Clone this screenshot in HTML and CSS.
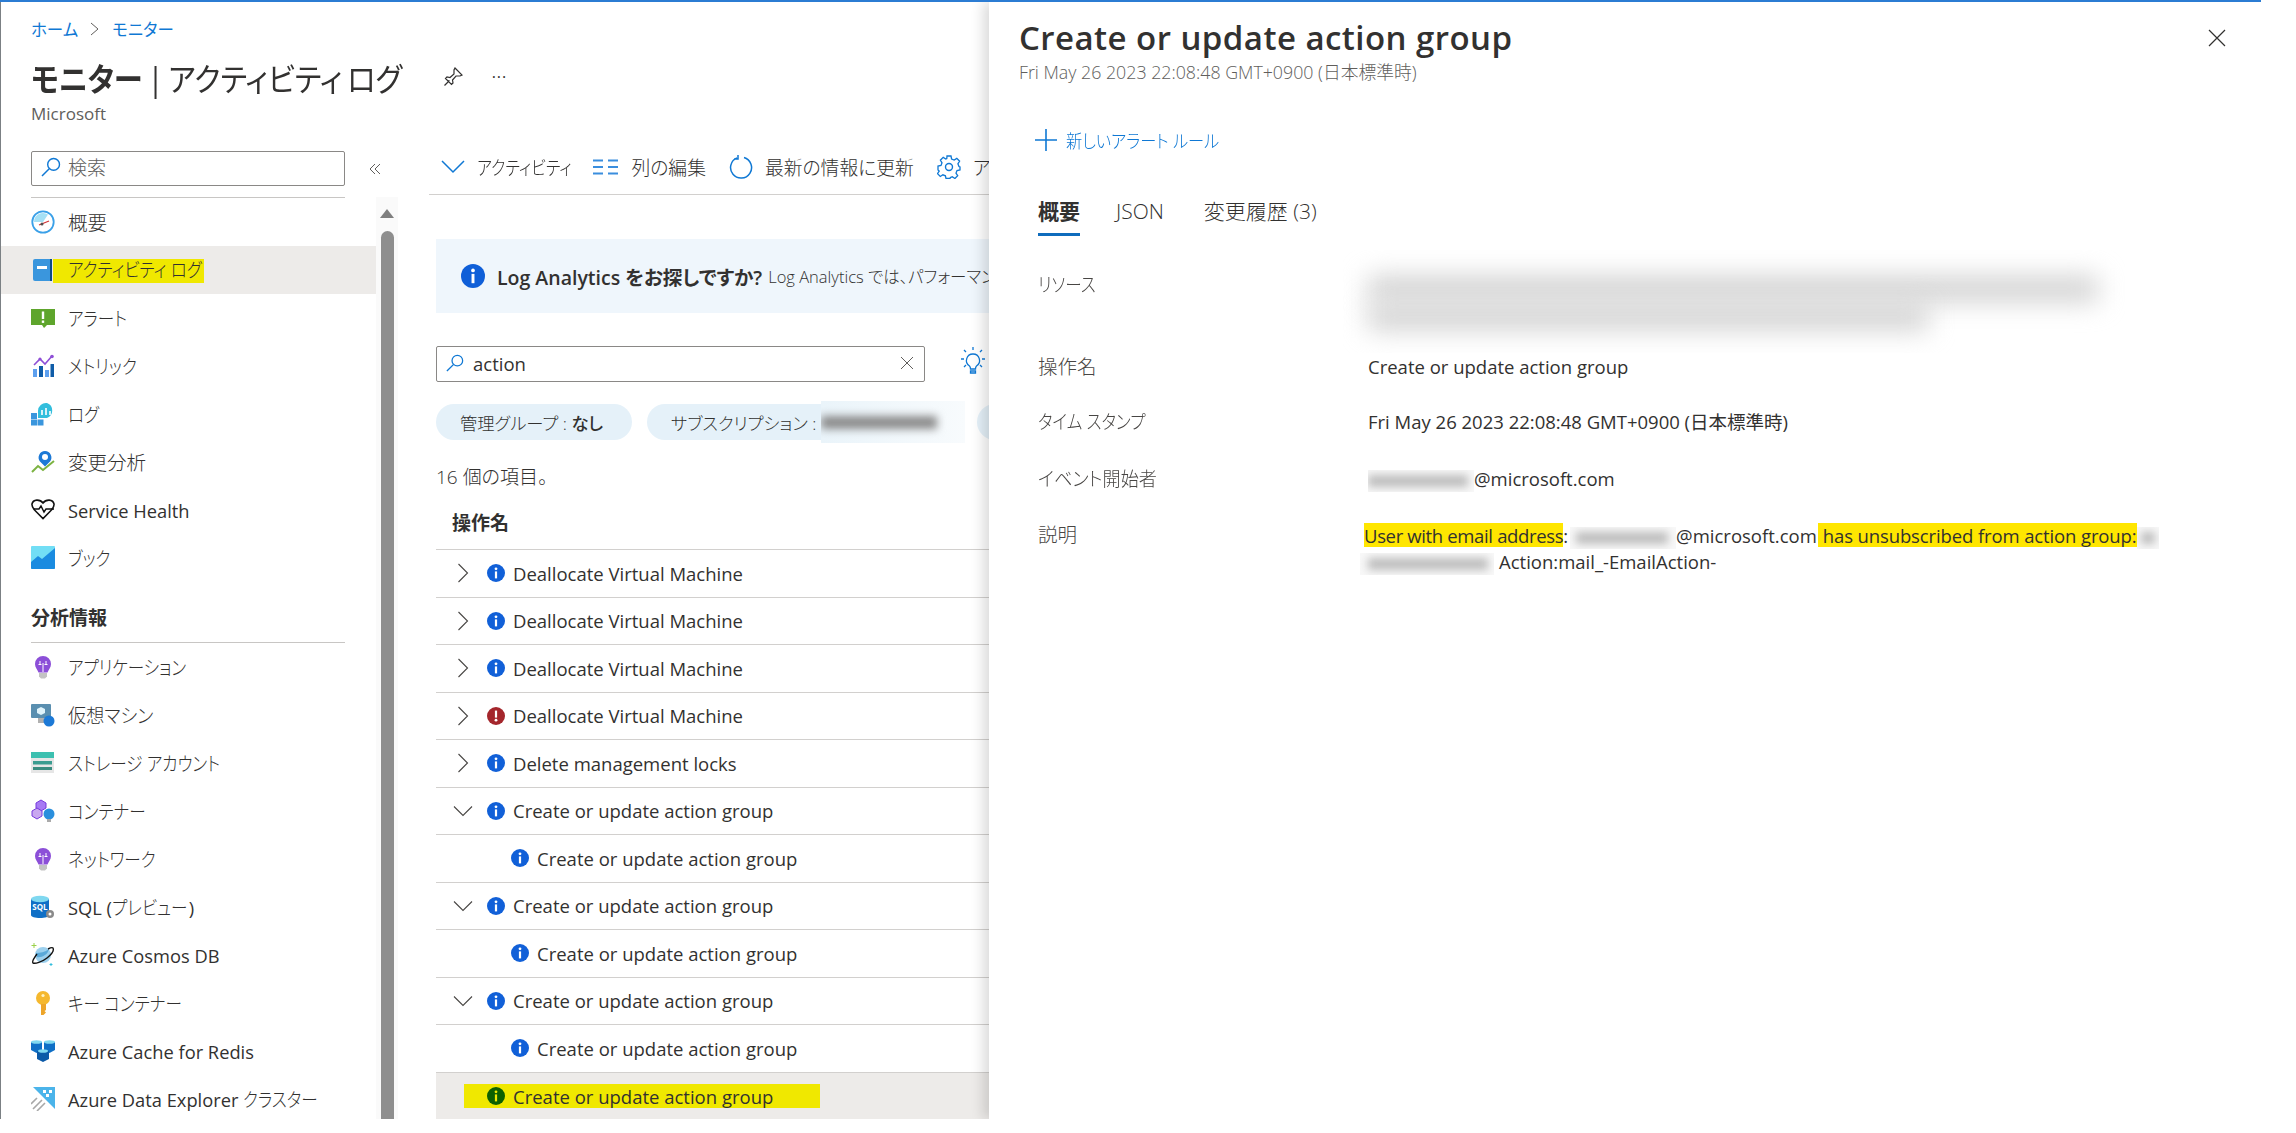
FILE: index.html
```html
<!DOCTYPE html>
<html lang="ja">
<head>
    <meta charset="UTF-8">
    <title>モニター | アクティビティ ログ</title>
    <link rel="stylesheet" href="styles.css">
</head>
<body>

<svg class="defs" width="0" height="0">
    <symbol id="info" viewBox="0 0 18 18"><circle cx="9" cy="9" r="9" fill="currentColor"/><rect x="7.9" y="7.4" width="2.2" height="7" style="fill:var(--mark,#fff)"/><circle cx="9" cy="4.8" r="1.4" style="fill:var(--mark,#fff)"/></symbol>
    <symbol id="err" viewBox="0 0 18 18"><circle cx="9" cy="9" r="9" fill="#a4262c"/><rect x="7.9" y="3.6" width="2.2" height="7" fill="#fff"/><circle cx="9" cy="13.2" r="1.4" fill="#fff"/></symbol>
    <symbol id="right" viewBox="0 0 12 20"><path d="M1.5 1l9 9-9 9" fill="none" stroke="#484644" stroke-width="1.1"/></symbol>
    <symbol id="down" viewBox="0 0 20 12"><path d="M1 1.500l9 9 9-9" fill="none" stroke="#484644" stroke-width="1.1"/></symbol>
    <symbol id="lens" viewBox="0 0 20 20"><circle cx="12.600" cy="7.400" r="5.900" fill="none" stroke="#0f78d4" stroke-width="1.400"/><path d="M8.200 11.800L1 19" fill="none" stroke="#0f78d4" stroke-width="1.500"/></symbol>
    <symbol id="bulb" viewBox="0 0 24 24"><path d="M12 1a8 8 0 0 0-8 8c0 3.500 2.500 5.500 3.500 8.500h9c1-3 3.500-5 3.500-8.500a8 8 0 0 0-8-8z" fill="#8c4fd8"/><path d="M8 18h8v3.500l-2 2h-4l-2-2z" fill="#c3c3c3"/><path d="M9 6v3.500M15 6v3.500M7.500 9.500h3M13.500 9.500h3M12 8v9" stroke="#fff" stroke-width="1" fill="none"/></symbol>
</svg>

<div class="page">
    <div class="blade">
        <header class="blade-head">
            <nav class="crumbs"><a>ホーム</a>
                <svg width="10" height="14" viewBox="0 0 10 14"><path d="M1 1l7 6-7 6" fill="none" stroke="#605e5c"/></svg>
                <a>モニター</a></nav>
            <div class="title-row">
                <h1><b>モニター</b> | アクティビティ ログ</h1>
                <svg class="pin" width="22" height="22" viewBox="0 0 22 22"><path d="M13 2l7 7-2 1-4 0-3.500 4 .5 3-1.500 1.500-6-6L5 11l3 .5 4-3.500 0-4zM7.500 14.500L2.500 19.500" fill="none" stroke="#323130" stroke-width="1.200"/></svg>
                <span class="more">···</span>
            </div>
            <div class="org">Microsoft</div>
        </header>

        <div class="columns">
            <aside class="side">
                <div class="side-search">
                    <div class="searchbox">
                        <svg width="20" height="20"><use href="#lens"/></svg>
                        <span>検索</span>
                    </div>
                    <svg class="collapse" width="12" height="12" viewBox="0 0 12 12"><path d="M6 1L1 6l5 5M11 1L6 6l5 5" fill="none" stroke="#605e5c"/></svg>
                </div>
                <div class="side-body">
                    <div class="menu">
                        <div class="menu-sep"></div>
                        <a class="item"><svg class="ico" viewBox="0 0 24 24"><circle cx="12" cy="12" r="10.700" fill="#fff" stroke="#3aa0e8" stroke-width="1.800"/><path d="M3 12a9 9 0 0 1 14-7.500L12 12z" fill="#a5e0f5"/><path d="M8 15l10-4" stroke="#d13438" stroke-width="1.300"/><circle cx="11" cy="14" r="1.500" fill="#505050"/></svg><span class="squeeze squeeze-off">概要</span></a>
                        <a class="item active"><svg class="ico" viewBox="0 0 24 24"><rect x="2" y="1" width="19" height="22" rx="2" fill="#3a96dd"/><rect x="19" y="1" width="2" height="22" fill="#0f4a85"/><rect x="6" y="8" width="10" height="3" fill="#fff"/></svg><span class="hl"><span class="squeeze">アクティビティ ログ</span></span></a>
                        <a class="item"><svg class="ico" viewBox="0 0 24 24"><path d="M0 3h24v16h-8l-3 3-2-3H0z" fill="#5ea52c"/><rect x="10.800" y="5.500" width="2.400" height="7.500" fill="#fff"/><rect x="10.800" y="14.500" width="2.400" height="2.400" fill="#fff"/></svg><span class="squeeze">アラート</span></a>
                        <a class="item"><svg class="ico" viewBox="0 0 24 24"><rect x="2" y="15" width="4" height="8" fill="#5ea0ef"/><rect x="8" y="12" width="4" height="11" fill="#0f5ca8"/><rect x="14" y="16" width="4" height="7" fill="#5ea0ef"/><rect x="19.500" y="10" width="3.500" height="13" fill="#0f5ca8"/><path d="M3 11l6-6 5 5 7-8" fill="none" stroke="#8f4fd6" stroke-width="1.600"/><circle cx="21" cy="2.500" r="1.800" fill="#8f4fd6"/><circle cx="9" cy="5" r="1.600" fill="#8f4fd6"/></svg><span class="squeeze">メトリック</span></a>
                        <a class="item"><svg class="ico" viewBox="0 0 24 24"><rect x="0" y="11" width="6" height="6" fill="#3a96dd"/><rect x="0" y="17.500" width="6" height="6" fill="#3a96dd"/><rect x="6.500" y="17.500" width="6" height="6" fill="#3a96dd"/><path d="M16 1a8 8 0 0 1 0 15H7V9a8 8 0 0 1 9-8z" fill="#32bedd"/><path d="M11 8v5M15 6v7M19 9v4" stroke="#fff" stroke-width="1.600"/></svg><span class="squeeze">ログ</span></a>
                        <a class="item"><svg class="ico" viewBox="0 0 24 24"><path d="M1 22l6-6 5 4 11-9" fill="none" stroke="#7cb342" stroke-width="2"/><path d="M14 1a6.500 6.500 0 0 0-5 10.500l5 5 5-5A6.500 6.500 0 0 0 14 1z" fill="#1c79d6"/><circle cx="14" cy="7" r="3" fill="#fff"/></svg><span class="squeeze squeeze-off">変更分析</span></a>
                        <a class="item"><svg class="ico" viewBox="0 0 24 24"><path d="M12 5C9 1 2 1 1 6c-.5 3 2 5.500 4 7.500l7 7 7-7c2-2 4.500-4.500 4-7.500-1-5-8-5-11-1z" fill="none" stroke="#111" stroke-width="1.600"/><path d="M3 11h5l2-3 3 6 2-3h8" fill="#fff" stroke="#111" stroke-width="1.400"/></svg><span class="lat">Service Health</span></a>
                        <a class="item"><svg class="ico" viewBox="0 0 24 24"><rect width="24" height="23" rx="1" fill="#72def5"/><path d="M0 16l7-6 4 3 13-11v20a1 1 0 0 1-1 1H1a1 1 0 0 1-1-1z" fill="#1a8be0"/></svg><span class="squeeze">ブック</span></a>
                        <h3 class="menu-head">分析情報</h3>
                        <a class="item"><svg class="ico"><use href="#bulb"/></svg><span class="squeeze">アプリケーション</span></a>
                        <a class="item"><svg class="ico" viewBox="0 0 24 24"><rect y="1" width="20" height="14" rx="1" fill="#5a8fb0"/><path d="M7 15h6v5H7z" fill="#b0b0b0"/><path d="M10 4l4 2v4l-4 2-4-2V6z" fill="#dff3fb"/><circle cx="18" cy="18" r="5.500" fill="#1c79d6"/></svg><span class="squeeze squeeze-mixed">仮想マシン</span></a>
                        <a class="item"><svg class="ico" viewBox="0 0 24 24"><rect y="1" width="23" height="21" fill="#e6e6e6"/><rect y="1" width="23" height="6" fill="#3cc0b0"/><rect x="2" y="10" width="19" height="3.500" fill="#3a9c90"/><rect x="2" y="16" width="19" height="3" fill="#3a8c80"/></svg><span class="squeeze">ストレージ アカウント</span></a>
                        <a class="item"><svg class="ico" viewBox="0 0 24 24"><path d="M10 1l5 3v5l-5 3-5-3V4z" fill="#a67af4" stroke="#773adc"/><path d="M6 9l5 3v5l-5 3-5-3v-5z" fill="#c9a8f0" stroke="#773adc"/><circle cx="18" cy="15" r="5.500" fill="#2a8fdd"/><rect x="16" y="20" width="4" height="3" fill="#aaa"/></svg><span class="squeeze">コンテナー</span></a>
                        <a class="item"><svg class="ico"><use href="#bulb"/></svg><span class="squeeze">ネットワーク</span></a>
                        <a class="item"><svg class="ico" viewBox="0 0 24 24"><path d="M0 4v16c0 2 4 3 9 3s9-1 9-3V4z" fill="#0f6fc6"/><ellipse cx="9" cy="4" rx="9" ry="3.200" fill="#7fd8f0"/><text class="sql" x="9" y="15" text-anchor="middle">SQL</text><circle cx="19" cy="19" r="4" fill="#8a8a8a"/><circle cx="19" cy="19" r="1.500" fill="#fff"/></svg><span class="lat">SQL (</span><span class="squeeze squeeze-pull">プレビュー</span><span class="lat">)</span></a>
                        <a class="item"><svg class="ico" viewBox="0 0 24 24"><circle cx="12" cy="12" r="8" fill="#9cd0ee"/><path d="M5 10c4 0 9-1 13-4-1 6-8 9-12 8z" fill="#59a8d8"/><path d="M6 11c-3 4-5 8-4 9 2 1 9-1 14-5s7-8 6-10c-1-1-3 0-5 1" fill="none" stroke="#111" stroke-width="1.400"/><path d="M3 0v5M.5 2.500h5" stroke="#9ad14a"/><path d="M20 20v3M18.500 21.500h3" stroke="#32bedd"/></svg><span class="lat">Azure Cosmos DB</span></a>
                        <a class="item"><svg class="ico" viewBox="0 0 24 24"><circle cx="12" cy="7" r="7" fill="#f5b82e"/><circle cx="12" cy="4.500" r="1.600" fill="#fff3c4"/><path d="M10 13h5v6l-1.500 1 1.500 1.500-2.500 2.500H10z" fill="#eda52a"/></svg><span class="squeeze">キー コンテナー</span></a>
                        <a class="item"><svg class="ico" viewBox="0 0 24 24"><path d="M0 3h11v8l-5.500 3L0 11z" fill="#0f6fc6"/><path d="M13 3h11v8l-5.500 3L13 11z" fill="#0f6fc6"/><path d="M6 12h12v8l-6 3-6-3z" fill="#0b5aa8"/><ellipse cx="5.500" cy="3" rx="5.500" ry="1.800" fill="#7fd8f0"/><ellipse cx="18.500" cy="3" rx="5.500" ry="1.800" fill="#7fd8f0"/><ellipse cx="12" cy="12" rx="5" ry="1.800" fill="#7fd8f0"/></svg><span class="lat">Azure Cache for Redis</span></a>
                        <a class="item"><svg class="ico" viewBox="0 0 24 24"><path d="M2 0h22v22z" fill="#4bb4ea"/><g fill="#fff"><rect x="12" y="3" width="3" height="3"/><rect x="18" y="3" width="3" height="3"/><rect x="15" y="7" width="3" height="3"/></g><path d="M2 22L11 13M6 24l8-8M0 17l6-6" stroke="#a8a8a8" stroke-width="1.600"/></svg><span class="lat">Azure Data Explorer </span><span class="squeeze">クラスター</span></a>
                    </div>
                    <div class="scroll">
                        <i class="scroll-up"></i>
                        <i class="scroll-thumb"></i>
                    </div>
                </div>
            </aside>

            <main class="main">
                <div class="toolbar">
                    <button class="tool"><svg width="24" height="14" viewBox="0 0 24 14"><path d="M1 1l11 11L23 1" fill="none" stroke="#0f78d4" stroke-width="1.500"/></svg><span class="squeeze squeeze-tool">アクティビティ</span></button>
                    <button class="tool"><svg width="26" height="16" viewBox="0 0 26 16"><path d="M0 1.500h10M0 8h10M0 14.500h10M15 1.500h10M15 8h10M15 14.500h10" stroke="#3a8ede" stroke-width="2"/></svg>列の編集</button>
                    <button class="tool"><svg width="24" height="26" viewBox="0 0 24 26"><path d="M15 3.500a10.500 10.500 0 1 1-7 .4M9 1v4H5" fill="none" stroke="#0f78d4" stroke-width="1.500"/></svg>最新の情報に更新</button>
                    <button class="tool"><svg width="24" height="24" viewBox="0 0 24 24"><circle cx="12" cy="12" r="3.500" fill="none" stroke="#0f78d4" stroke-width="1.400"/><path d="M10 1h4l.6 3 2.600 1.100 2.600-1.700 2.800 2.800-1.700 2.600L22 11.500l1 .5v3l-3 .6-1 2.500 1.700 2.600-2.800 2.800-2.600-1.700-1.900.7-.4 1h-4l-.6-2.700-2.500-1-2.600 1.700-2.800-2.800 1.700-2.600L1 15v-4l3-.6 1-2.600L3.400 5.200l2.800-2.800 2.600 1.700 1-.5z" fill="none" stroke="#0f78d4" stroke-width="1.300"/></svg>アラート</button>
                </div>

                <div class="banner">
                    <svg class="banner-icon" width="24" height="24" style="color:#0f5fd8"><use href="#info"/></svg>
                    <span class="banner-lead">Log Analytics をお探しですか?</span>
                    <span class="banner-text">Log Analytics では、パフォーマンス</span>
                </div>

                <div class="filter-row">
                    <div class="filter">
                        <svg width="18" height="20"><use href="#lens"/></svg>
                        <span class="filter-text">action</span>
                        <svg class="filter-x" width="14" height="14" viewBox="0 0 14 14"><path d="M1 1l12 12M13 1L1 13" stroke="#605e5c"/></svg>
                    </div>
                    <svg class="tip" width="24" height="28" viewBox="0 0 24 28"><path d="M12 7a6.500 6.500 0 0 0-3.500 12c.5.500 1 2 1 3h5c0-1 .5-2.500 1-3A6.500 6.500 0 0 0 12 7zM9.500 24h5v2h-5zM12 0v3M3 3l2 2M21 3l-2 2M0 12h3M21 12h3M3 20l2-2M21 20l-2-2" fill="none" stroke="#0f78d4" stroke-width="1.300"/></svg>
                </div>

                <div class="pills">
                    <span class="pill">管理グループ : <b>なし</b></span>
                    <span class="pill pill-masked">サブスクリプション : <span class="masked"><i class="smear"></i></span></span>
                    <span class="pill pill-next"></span>
                </div>

                <div class="count">16 個の項目。</div>
                <div class="col-head">操作名</div>

                <div class="rows">
                    <div class="row"><svg class="chev"><use href="#right"/></svg><svg class="dot"><use href="#info"/></svg>Deallocate Virtual Machine</div>
                    <div class="row"><svg class="chev"><use href="#right"/></svg><svg class="dot"><use href="#info"/></svg>Deallocate Virtual Machine</div>
                    <div class="row"><svg class="chev"><use href="#right"/></svg><svg class="dot"><use href="#info"/></svg>Deallocate Virtual Machine</div>
                    <div class="row"><svg class="chev"><use href="#right"/></svg><svg class="dot"><use href="#err"/></svg>Deallocate Virtual Machine</div>
                    <div class="row"><svg class="chev"><use href="#right"/></svg><svg class="dot"><use href="#info"/></svg>Delete management locks</div>
                    <div class="row"><svg class="chev chev-down"><use href="#down"/></svg><svg class="dot"><use href="#info"/></svg>Create or update action group</div>
                    <div class="row child"><svg class="dot"><use href="#info"/></svg>Create or update action group</div>
                    <div class="row"><svg class="chev chev-down"><use href="#down"/></svg><svg class="dot"><use href="#info"/></svg>Create or update action group</div>
                    <div class="row child"><svg class="dot"><use href="#info"/></svg>Create or update action group</div>
                    <div class="row"><svg class="chev chev-down"><use href="#down"/></svg><svg class="dot"><use href="#info"/></svg>Create or update action group</div>
                    <div class="row child"><svg class="dot"><use href="#info"/></svg>Create or update action group</div>
                    <div class="row selected"><span class="row-hl"><svg class="dot"><use href="#info"/></svg>Create or update action group</span></div>
                </div>
            </main>
        </div>
    </div>

    <section class="panel">
        <svg class="panel-close" width="18" height="18" viewBox="0 0 18 18"><path d="M1 1l16 16M17 1L1 17" stroke="#323130" stroke-width="1.200"/></svg>
        <h2>Create or update action group</h2>
        <div class="panel-date">Fri May 26 2023 22:08:48 GMT+0900 (日本標準時)</div>

        <a class="new-rule"><svg width="22" height="22" viewBox="0 0 22 22"><path d="M11 0v22M0 11h22" stroke="#0f78d4" stroke-width="1.600"/></svg><span class="squeeze squeeze-rule">新しいアラート ルール</span></a>

        <div class="tabs">
            <span class="tab on">概要</span>
            <span class="tab">JSON</span>
            <span class="tab tab-last">変更履歴 (3)</span>
        </div>

        <dl class="details">
            <dt class="dt-first"><span class="squeeze">リソース</span></dt>
            <dd><div class="resource-blur"><i class="smear smear-long"></i><i class="smear smear-short"></i></div></dd>
            <dt>操作名</dt>
            <dd>Create or update action group</dd>
            <dt><span class="squeeze">タイム スタンプ</span></dt>
            <dd>Fri May 26 2023 22:08:48 GMT+0900 (日本標準時)</dd>
            <dt><span class="squeeze squeeze-mixed">イベント開始者</span></dt>
            <dd><span class="hide hide-mail"><i class="smear"></i></span>@microsoft.com</dd>
            <dt>説明</dt>
            <dd class="desc"><span class="mark mark-a">User with email address</span>:<span class="hide hide-user"><i class="smear"></i></span>@microsoft.com<span class="mark mark-b">has unsubscribed from action group:</span><span class="hide hide-tail"><i class="smear"></i></span><br><span class="hide hide-group"><i class="smear"></i></span>Action:mail_-EmailAction-</dd>
        </dl>
    </section>
</div>

</body>
</html>
```

FILE: styles.css
```css
* {
    box-sizing: border-box;
}
html, body {
    margin: 0;
    height: 1133px;
    overflow: hidden;
    background: #fff;
}
body {
    font-family: "Open Sans", "Noto Sans CJK JP", sans-serif;
    font-feature-settings: "palt";
    font-weight: 400;
    font-size: 18px;
    color: #323130;
}
.defs {
    position: absolute;
}
.page {
    display: flex;
    width: 2261px;
    height: 1119px;
    border-top: 2px solid #2b7cd3;
    overflow: hidden;
}
.blade {
    width: 989px;
    flex: none;
    border-left: 1px solid #7b8084;
    overflow: hidden;
}

/* the source font has narrow kana, this gets the same widths */
.squeeze {
    display: inline-block;
    transform: translateY(var(--lift, 0)) scaleX(var(--sx, .85));
    transform-origin: 0 50%;
    white-space: pre;
}
.squeeze-mixed {
    --sx: .93;
}
.squeeze-rule {
    --sx: .9;
}
.squeeze-off {
    --sx: 1;
}
.squeeze-pull {
    margin-right: -12px;
}
.squeeze-tool {
    margin-right: -18px;
}

/* header */
.blade-head {
    height: 123px;
    padding: 15px 0 0 30px;
}
.crumbs {
    display: flex;
    align-items: center;
    gap: 12px;
    height: 24px;
    font-size: 16.500px;
}
.crumbs a, .new-rule {
    color: #0f78d4;
}
.title-row {
    display: flex;
    align-items: center;
    height: 40px;
    margin-top: 16px;
}
h1 {
    display: inline-block;
    margin: 0 -35px 0 0;
    font-size: 32px;
    font-weight: 400;
    word-spacing: -3px;
    white-space: pre;
    transform: scaleX(.915);
    transform-origin: 0 50%;
}
h1 b {
    font-weight: 700;
}
.pin {
    margin-left: 40px;
}
.more {
    margin-left: 28px;
    font-size: 16px;
    letter-spacing: 1px;
}
.org {
    height: 22px;
    margin-top: 6px;
    color: #605e5c;
    font-size: 17px;
    line-height: 22px;
}

.columns {
    display: flex;
}

/* left menu */
.side {
    width: 397px;
    flex: none;
}
.side-search {
    display: flex;
    align-items: center;
    padding: 26px 0 0 30px;
}
.searchbox {
    display: flex;
    align-items: center;
    gap: 7px;
    width: 314px;
    height: 35px;
    padding: 0 0 3px 9px;
    border: 1px solid #8a8886;
    border-radius: 2px;
    color: #605e5c;
    font-size: 19px;
    font-weight: 300;
}
.collapse {
    margin-left: 24px;
}
.side-body {
    display: flex;
}
.menu {
    width: 375px;
    flex: none;
    --lift: -1px;
}
.menu-sep {
    height: 1px;
    margin: 11px 31px 0 30px;
    background: #c8c6c4;
}
.item {
    display: flex;
    align-items: center;
    height: 48px;
    padding-left: 30px;
    font-size: 19.500px;
    font-weight: 300;
    white-space: pre;
}
.item .lat {
    font-size: 18.300px;
    font-weight: 400;
}
.item.active {
    background: #edebe9;
}
.ico {
    width: 24px;
    height: 24px;
    flex: none;
    margin-right: 13px;
}
.hl {
    width: 151px;
    height: 24px;
    margin: 2px 0 0 -15px;
    padding-left: 15px;
    background: #f0e800;
    line-height: 24px;
}
.sql {
    fill: #fff;
    font-size: 8px;
    font-weight: 700;
}
.menu-head {
    height: 61px;
    margin: 0 31px 0 30px;
    padding-top: 24px;
    border-bottom: 1px solid #c8c6c4;
    font-size: 19px;
    font-weight: 700;
    line-height: 24px;
}
.scroll {
    display: flex;
    flex-direction: column;
    align-items: center;
    width: 22px;
    margin-top: 11px;
    background: #fafafa;
}
.scroll-up {
    width: 0;
    height: 0;
    margin-top: 12px;
    border: 7px solid transparent;
    border-top: 0;
    border-bottom: 9px solid #7f7f7f;
}
.scroll-thumb {
    width: 13px;
    height: 900px;
    margin-top: 13px;
    border-radius: 7px 7px 0 0;
    background: #8e8e8e;
}

/* main column */
.main {
    width: 591px;
    flex: none;
    padding-left: 38px;
    white-space: nowrap;
}
.toolbar {
    display: flex;
    gap: 23px;
    height: 52px;
    margin: 18px 0 0 -7px;
    padding: 0 0 3px 12px;
    border-bottom: 1px solid #d2d0ce;
}
.tool {
    display: flex;
    align-items: center;
    gap: 12px;
    padding: 0;
    border: 0;
    background: none;
    color: #323130;
    font: inherit;
    font-weight: 300;
    font-size: 18.800px;
    white-space: pre;
}
.banner {
    display: flex;
    align-items: center;
    height: 74px;
    margin-top: 44px;
    padding-left: 25px;
    background: #eff6fc;
}
.banner-icon {
    flex: none;
    margin-right: 12px;
}
.banner-lead {
    font-size: 19.500px;
    font-weight: 600;
}
.banner-text {
    margin-left: 6px;
    font-size: 16.500px;
    font-weight: 300;
}
.filter-row {
    display: flex;
    align-items: center;
    margin-top: 33px;
}
.filter {
    display: flex;
    align-items: center;
    width: 489px;
    height: 36px;
    padding: 0 10px 2px 9px;
    border: 1px solid #8a8886;
    border-radius: 2px;
}
.filter-text {
    margin-left: 9px;
    font-size: 18.500px;
}
.filter-x {
    margin-left: auto;
}
.tip {
    margin: -6px 0 0 36px;
}
.pills {
    display: flex;
    gap: 15px;
    height: 36px;
    margin-top: 22px;
}
.pill {
    display: flex;
    align-items: center;
    flex: none;
    width: 196px;
    height: 36px;
    padding-left: 24px;
    border-radius: 18px;
    background: #e5f1f9;
    font-size: 17.300px;
    font-weight: 300;
    white-space: pre;
}
.pill b {
    font-weight: 500;
}
.pill-masked {
    width: 315px;
}
.pill-next {
    width: 60px;
    padding: 0;
}
.masked {
    display: flex;
    align-items: center;
    flex: none;
    width: 144px;
    height: 42px;
    background: linear-gradient(90deg, #eaf4fa, #f8fbfd);
    overflow: hidden;
}
.smear {
    display: block;
    background: #9a9a9a;
    filter: blur(4px);
}
.masked .smear {
    width: 116px;
    height: 13px;
    background: #8a8a8a;
}
.count {
    height: 24px;
    margin-top: 25px;
    line-height: 24px;
    font-weight: 300;
    font-size: 19px;
}
.col-head {
    height: 61px;
    padding: 22px 0 0 16px;
    border-bottom: 1px solid #d2d0ce;
    font-size: 19px;
    font-weight: 700;
    line-height: 24px;
}
.row {
    display: flex;
    align-items: center;
    height: 47.500px;
    border-bottom: 1px solid #d2d0ce;
    font-size: 18.500px;
}
.chev {
    width: 12px;
    height: 20px;
    flex: none;
    margin-left: 21px;
}
.chev-down {
    width: 20px;
    height: 12px;
    margin: 0 -4px 0 17px;
}
.dot {
    width: 18px;
    height: 18px;
    flex: none;
    margin: 0 8px 0 18px;
    color: #1160d8;
}
.child {
    padding-left: 57px;
}
.selected {
    border-bottom: 0;
    background: #edebe9;
}
.row-hl {
    display: flex;
    align-items: center;
    width: 356px;
    height: 24px;
    margin-left: 28px;
    padding-left: 5px;
    background: #f0e800;
    --mark: #f0e800;
}
.row-hl .dot {
    color: #0d6000;
}

/* right panel */
.panel {
    position: relative;
    flex: 1;
    padding-left: 30px;
    background: #fff;
    box-shadow: -6px 0 12px rgba(0, 0, 0, .14);
}
.panel-close {
    position: absolute;
    top: 27px;
    left: 1219px;
}
h2 {
    height: 44px;
    margin: 14px 0 0;
    font-size: 33px;
    font-weight: 600;
    letter-spacing: .45px;
    line-height: 44px;
}
.panel-date {
    height: 24px;
    color: #605e5c;
    font-size: 17.800px;
    font-weight: 300;
    line-height: 24px;
}
.new-rule {
    display: flex;
    align-items: center;
    gap: 9px;
    height: 40px;
    margin: 36px 0 0 16px;
    font-size: 18px;
    font-weight: 300;
    white-space: pre;
}
.tabs {
    display: flex;
    gap: 36px;
    margin: 31px 0 0 19px;
}
.tab {
    height: 45px;
    padding: 8px 0 10px;
    border-bottom: 3px solid transparent;
    font-size: 21px;
    font-weight: 300;
    line-height: 24px;
}
.tab-last {
    margin-left: 4px;
}
.tab.on {
    border-bottom-color: #0f6cbd;
    font-weight: 700;
}
.details {
    display: grid;
    grid-template-columns: 330px 1fr;
    grid-template-rows: 83px 55px 57px 56px auto;
    margin: 36px 0 0 19px;
}
dt {
    color: #484644;
    font-size: 19.500px;
    font-weight: 300;
    line-height: 24px;
}
.dt-first {
    padding-top: 1px;
}
dd {
    margin: 0;
    font-size: 18.500px;
    line-height: 24px;
    white-space: nowrap;
}
.resource-blur {
    height: 103px;
    margin: -22px 0 0 -25px;
    padding: 26px 0 0 25px;
    overflow: hidden;
}
.resource-blur .smear {
    height: 26px;
    margin-bottom: 2px;
    background: #d2d2d2;
    filter: blur(13px);
}
.smear-long {
    width: 730px;
}
.smear-short {
    width: 560px;
}
.desc {
    line-height: 26px;
}
.mark {
    display: inline-block;
    height: 24px;
    line-height: 26px;
    background: #ffe600;
}
.mark-a {
    margin-left: -4px;
    letter-spacing: -.35px;
}
.mark-b {
    padding-left: 5px;
    margin-left: 1px;
    letter-spacing: -.12px;
}
.hide {
    display: inline-block;
    height: 22px;
    background: #f8f8f8;
    vertical-align: middle;
    overflow: hidden;
}
.hide .smear {
    height: 12px;
    margin-top: 5px;
    background: #bdbdbd;
    filter: blur(4px);
}
.hide-mail {
    width: 106px;
}
.hide-mail .smear {
    width: 100px;
}
.hide-user {
    width: 106px;
    margin-left: 2px;
}
.hide-user .smear {
    width: 92px;
    margin-left: 6px;
}
.hide-tail {
    width: 22px;
}
.hide-tail .smear {
    width: 14px;
    margin-left: 4px;
}
.hide-group {
    width: 134px;
    margin-left: -8px;
    margin-right: 5px;
}
.hide-group .smear {
    width: 120px;
    margin-left: 8px;
}
```
